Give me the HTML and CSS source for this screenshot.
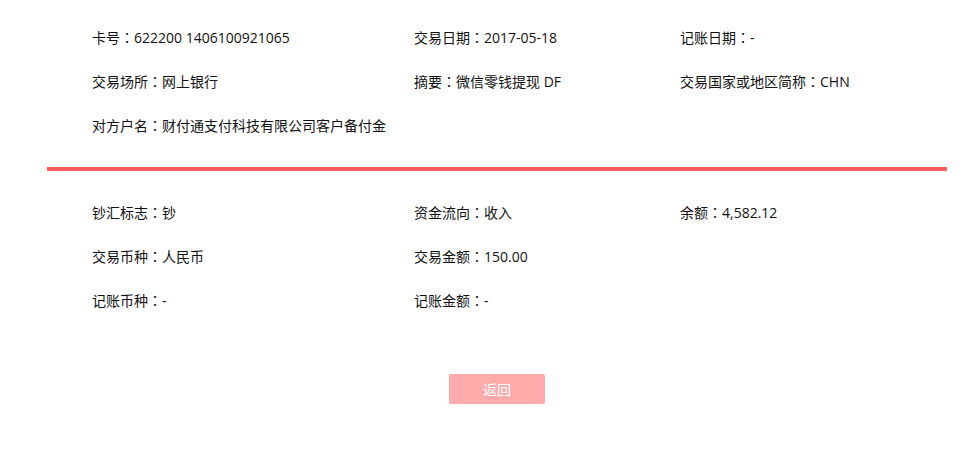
FILE: index.html
```html
<!DOCTYPE html>
<html lang="zh-CN">
<head>
    <meta charset="UTF-8">
    <title>交易明细</title>
    <link rel="stylesheet" href="styles.css">
</head>
<body>
    <div class="detail">
        <div class="info-grid top">
            <div class="info-item">卡号<span class="colon" lang="zh-TW">：</span>622200 1406100921065</div>
            <div class="info-item">交易日期<span class="colon" lang="zh-TW">：</span>2017-05-18</div>
            <div class="info-item">记账日期<span class="colon" lang="zh-TW">：</span>-</div>
            <div class="info-item">交易场所<span class="colon" lang="zh-TW">：</span>网上银行</div>
            <div class="info-item">摘要<span class="colon" lang="zh-TW">：</span>微信零钱提现 DF</div>
            <div class="info-item">交易国家或地区简称<span class="colon" lang="zh-TW">：</span>CHN</div>
            <div class="info-item">对方户名<span class="colon" lang="zh-TW">：</span>财付通支付科技有限公司客户备付金</div>
        </div>

        <div class="divider"></div>

        <div class="info-grid">
            <div class="info-item">钞汇标志<span class="colon" lang="zh-TW">：</span>钞</div>
            <div class="info-item">资金流向<span class="colon" lang="zh-TW">：</span>收入</div>
            <div class="info-item">余额<span class="colon" lang="zh-TW">：</span>4,582.12</div>
            <div class="info-item">交易币种<span class="colon" lang="zh-TW">：</span>人民币</div>
            <div class="info-item">交易金额<span class="colon" lang="zh-TW">：</span>150.00</div>
            <div class="info-item"></div>
            <div class="info-item">记账币种<span class="colon" lang="zh-TW">：</span>-</div>
            <div class="info-item">记账金额<span class="colon" lang="zh-TW">：</span>-</div>
        </div>

        <div class="actions">
            <button class="btn-back">返回</button>
        </div>
    </div>
</body>
</html>
```

FILE: styles.css
```css
body {
    margin: 0;
    font-family: "Open Sans", "Noto Sans CJK SC", sans-serif;
    font-size: 14px;
    color: #111;
    background-color: #fff;
}
.detail {
    width: 900px;
    margin-left: 47px;
}
.info-grid {
    display: grid;
    grid-template-columns: 322px 266px 1fr;
    padding-left: 45px;
}
.info-grid.top {
    padding-top: 15px;
}
.info-item {
    height: 44px;
    line-height: 44px;
    white-space: nowrap;
}
/* full-width colon sits centred in the TC face */
.colon {
    font-family: "Noto Sans CJK TC", sans-serif;
}
.divider {
    height: 4px;
    background-color: #ff5d5d;
    margin: 20px 0 19px;
}
.actions {
    display: flex;
    justify-content: center;
    margin-top: 52px;
}
.btn-back {
    width: 96px;
    height: 30px;
    border: none;
    border-radius: 2px;
    background-color: #ffabab;
    color: #fff;
    font-family: "Noto Sans CJK SC", sans-serif;
    font-size: 14px;
    cursor: pointer;
}
```
